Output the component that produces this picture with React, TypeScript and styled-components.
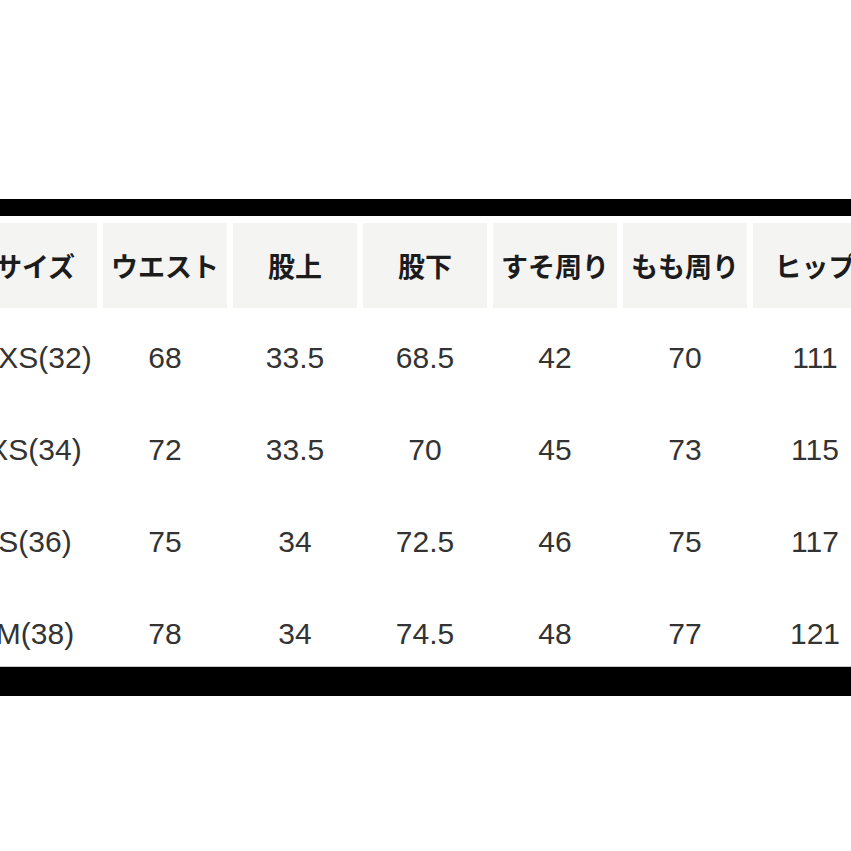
import React from "react";
import styled, { createGlobalStyle } from "styled-components";

const Global = createGlobalStyle`
  html, body {
    margin: 0;
    padding: 0;
    background: #ffffff;
    overflow: hidden;
  }
  body {
    font-family: "Liberation Sans", "Noto Sans CJK JP", sans-serif;
  }
`;

const Page = styled.div`
  width: 851px;
  height: 851px;
  overflow: hidden;
  padding-top: 199px;
  box-sizing: border-box;
`;

const Bar = styled.div<{ $h: number; $line?: boolean }>`
  height: ${(p) => p.$h}px;
  background: #000;
  border-top: ${(p) => (p.$line ? "1px solid #c8c8c8" : "none")};
`;

const Table = styled.div`
  margin-left: -27px;
  width: 904px;
`;

const HeaderRow = styled.div`
  display: grid;
  grid-template-columns: repeat(7, 124px);
  column-gap: 6px;
  margin-top: 7px;
`;

const HeadCell = styled.div`
  height: 85px;
  background: #f4f4f2;
  display: flex;
  align-items: center;
  justify-content: center;
  font-family: "Noto Sans CJK JP", sans-serif;
  font-weight: 700;
  font-size: 27px;
  color: #1c1c1c;
  white-space: nowrap;
`;

const Body = styled.div`
  display: grid;
  grid-template-columns: repeat(7, 124px);
  column-gap: 6px;
  row-gap: 52px;
  padding: 30px 0 12px;
`;

const Cell = styled.div`
  height: 40px;
  display: flex;
  align-items: center;
  justify-content: center;
  font-family: "Liberation Sans", "Noto Sans CJK JP", sans-serif;
  font-size: 30px;
  color: #333;
  white-space: nowrap;
`;

const headers = ["サイズ", "ウエスト", "股上", "股下", "すそ周り", "もも周り", "ヒップ"];
const rows = [
  ["XXS(32)", "68", "33.5", "68.5", "42", "70", "111"],
  ["XS(34)", "72", "33.5", "70", "45", "73", "115"],
  ["S(36)", "75", "34", "72.5", "46", "75", "117"],
  ["M(38)", "78", "34", "74.5", "48", "77", "121"],
];

export default function App() {
  return (
    <>
      <Global />
      <Page>
        <Bar $h={17} />
        <Table>
          <HeaderRow>
            {headers.map((h) => (
              <HeadCell key={h}>{h}</HeadCell>
            ))}
          </HeaderRow>
          <Body>
            {rows.flatMap((r, i) =>
              r.map((v, j) => <Cell key={`${i}-${j}`}>{v}</Cell>)
            )}
          </Body>
        </Table>
        <Bar $h={29} $line />
      </Page>
    </>
  );
}
